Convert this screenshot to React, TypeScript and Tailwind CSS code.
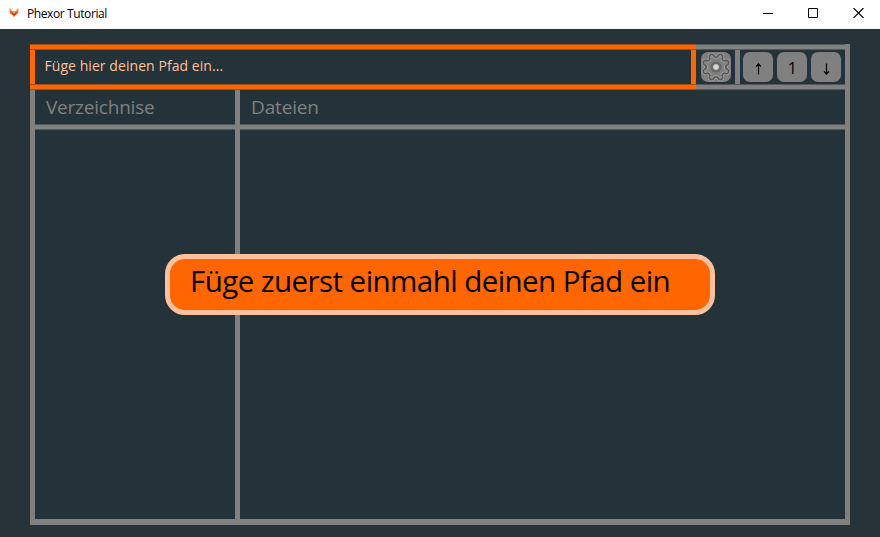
import type { ReactNode } from 'react';

function PhoenixLogo() {
  return (
    <svg width="12" height="12" viewBox="0 0 12 12">
      <path d="M1.8 1L3.4 3.6 5 4.6h2l1.6-1L10.2 1l.3 3.6L9.4 7 7.4 8 6 10.2 4.6 8l-2-1L1.5 4.6z" fill="#ee6a1c" />
      <path d="M3 5.2l3 1.3 3-1.3-1.4 2L6 8.8 4.4 7.2z" fill="#c23a12" />
      <path d="M5.2 5h1.6v1.4H5.2zM1.7 2l1.2 2.2-.9.3zM10.3 2L9.1 4.2l.9.3z" fill="#f9a23b" />
    </svg>
  );
}

function Gear() {
  const points = Array.from({ length: 128 }, (_, i) => {
    const a = (i / 128) * Math.PI * 2;
    const wave = Math.cos(8 * a + Math.PI);
    const r = 11.6 + 1.9 * Math.tanh(1.8 * wave);
    return `${(15 + r * Math.cos(a)).toFixed(2)},${(15 + r * Math.sin(a)).toFixed(2)}`;
  }).join(' ');
  return (
    <svg width="30" height="30" viewBox="0 0 30 30" fill="none">
      <polygon points={points} stroke="#a5a5a3" strokeWidth="3.2" />
      <polygon points={points} stroke="#595959" strokeWidth="1.7" />
      <circle cx="15" cy="15" r="4.4" stroke="#666666" strokeWidth="2.2" />
      <circle cx="15" cy="15" r="2.8" fill="#d5d6cd" />
    </svg>
  );
}

function GrayRule() {
  return <div className="h-1.5 shrink-0 border-y border-[#52595c] bg-[#808080]" />;
}

function OrangeRule() {
  return <div className="h-1.5 shrink-0 border-y border-[#a45015] bg-[#ff6600]" />;
}

function ToolButton({ children }: { children: ReactNode }) {
  return (
    <button className="flex h-[30px] w-[30px] shrink-0 items-center justify-center rounded-[7px] bg-[#808080] text-black">
      {children}
    </button>
  );
}

function ArrowIcon({ down = false }: { down?: boolean }) {
  return (
    <svg width="9" height="14" viewBox="0 0 9 14" className={down ? 'mt-[3px] rotate-180' : 'mt-[3px]'} fill="none" stroke="#000" strokeWidth="1.2">
      <path d="M4.5 12.5V2M2 4.7l2.5-2.7L7 4.7" />
    </svg>
  );
}

export default function App() {
  return (
    <div className="flex h-[537px] w-[880px] flex-col overflow-hidden bg-[#283339] font-['Open_Sans','Noto_Sans',sans-serif]">
      <header className="flex h-[29px] shrink-0 items-center bg-white pl-2">
        <div className="-mt-1"><PhoenixLogo /></div>
        <span className="ml-[7px] -mt-px whitespace-nowrap text-[12px] tracking-[-0.4px] text-black">Phexor Tutorial</span>
        <div className="mb-[3px] ml-auto flex items-center gap-[35px] pr-4">
          <svg width="10" height="10" shapeRendering="crispEdges"><path d="M0 5h10v1H0z" /></svg>
          <svg width="10" height="10"><path d="M.5.5h9v9h-9z" fill="none" stroke="#000" /></svg>
          <svg width="11" height="10"><path d="M.5 0l10 10M10.5 0l-10 10" stroke="#000" strokeWidth="1.1" fill="none" /></svg>
        </div>
      </header>

      <main className="relative mx-[30px] mt-[15px] flex h-[481px] flex-col bg-[#243239]">
        <div className="flex h-[46px] shrink-0">
          <div className="flex w-[666px] flex-col">
            <OrangeRule />
            <div className="flex-1 border-x-[5px] border-[#ff6600] pl-[9.5px] pt-[5px] text-[14px] leading-[21px] tracking-[0.06px] text-[#ffc09c]">
              Füge hier deinen Pfad ein...
            </div>
            <OrangeRule />
          </div>
          <div className="flex flex-1 flex-col border-r-[5px] border-[#808080]">
            <GrayRule />
            <div className="flex flex-1">
              <div className="flex flex-1 items-start pl-[5px] pt-0.5">
                <ToolButton><Gear /></ToolButton>
              </div>
              <div className="flex w-[110px] items-start gap-1 border-l-[5px] border-[#808080] pl-[3.4px] pt-0.5">
                <ToolButton><ArrowIcon /></ToolButton>
                <ToolButton><span className="pt-0.5 text-[16px] leading-none">1</span></ToolButton>
                <ToolButton><ArrowIcon down /></ToolButton>
              </div>
            </div>
            <GrayRule />
          </div>
        </div>

        <div className="flex flex-1 border-x-[5px] border-[#808080]">
          <section className="flex w-[205px] flex-col border-r-[5px] border-[#808080]">
            <h2 className="h-[34px] whitespace-nowrap pl-[11px] pt-[3px] text-[19px] leading-[28px] tracking-[-0.22px] text-[#808080]">Verzeichnise</h2>
            <GrayRule />
          </section>
          <section className="flex flex-1 flex-col">
            <h2 className="h-[34px] pl-[11px] pt-[3px] text-[19px] leading-[28px] tracking-[-0.15px] text-[#808080]">Dateien</h2>
            <GrayRule />
          </section>
        </div>
        <div className="h-1.5 shrink-0 bg-[#808080]" />

        <div className="absolute left-[135px] top-[210px] h-[61px] w-[550px] whitespace-nowrap rounded-[20px] border-[5px] border-[#ffc09c] bg-[#ff6600] pl-5 pt-px text-[29.5px] leading-[41px] tracking-[-0.56px] text-black">
          Füge zuerst einmahl deinen Pfad ein
        </div>
      </main>
    </div>
  );
}
